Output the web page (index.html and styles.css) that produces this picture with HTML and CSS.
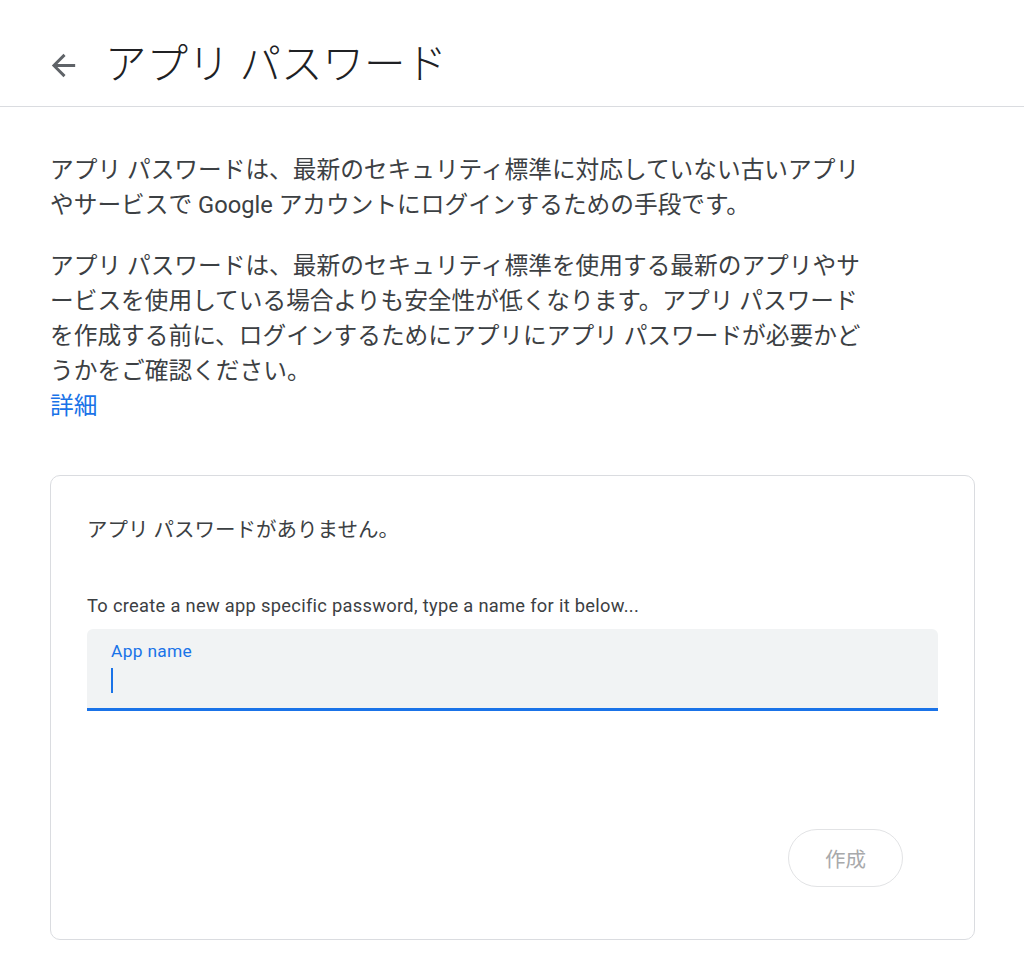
FILE: index.html
```html
<!DOCTYPE html>
<html lang="ja">
<head>
<meta charset="utf-8">
<title>アプリ パスワード</title>
<link rel="stylesheet" href="styles.css">
</head>
<body>
<header class="topbar">
  <a class="back" href="#" aria-label="戻る">
    <svg viewBox="0 0 24 24" width="35" height="35"><path d="M20 11H7.83l5.59-5.59L12 4l-8 8 8 8 1.41-1.41L7.83 13H20v-2z"/></svg>
  </a>
  <h1 class="title">アプリ パスワード</h1>
</header>
<main class="content">
  <p class="para">アプリ パスワードは、最新のセキュリティ標準に対応していない古いアプリやサービスで Google アカウントにログインするための手段です。</p>
  <p class="para last">アプリ パスワードは、最新のセキュリティ標準を使用する最新のアプリやサービスを使用している場合よりも安全性が低くなります。アプリ パスワードを作成する前に、ログインするためにアプリにアプリ パスワードが必要かどうかをご確認ください。</p>
  <a class="more" href="#">詳細</a>

  <section class="card">
    <p class="empty">アプリ パスワードがありません。</p>
    <p class="hint">To create a new app specific password, type a name for it below...</p>
    <div class="field">
      <span class="label">App name</span>
      <span class="caret"></span>
    </div>
    <div class="actions">
      <button class="create" type="button">作成</button>
    </div>
  </section>
</main>
</body>
</html>
```

FILE: styles.css
```css
html, body {
  margin: 0;
  padding: 0;
  background: #ffffff;
}

body {
  font-family: Roboto, "Noto Sans CJK JP", sans-serif;
  color: #3c4043;
}

.topbar {
  box-sizing: border-box;
  height: 107px;
  padding: 24px 0 0 46px;
  display: flex;
  align-items: center;
  gap: 24px;
  border-bottom: 1px solid #dadce0;
}

.back {
  display: flex;
  width: 35px;
  height: 35px;
}

.back svg {
  fill: #5f6368;
}

.title {
  margin: 0;
  font-weight: 300;
  font-size: 41.5px;
  line-height: 48px;
  color: #202124;
}

.content {
  padding: 46px 49px 0 50px;
}

.para {
  margin: 0 0 26px;
  max-width: 822px;
  font-size: 23.7px;
  line-height: 35px;
  color: #3c4043;
}

.para.last {
  margin-bottom: 0;
}

.more {
  display: block;
  font-size: 23.7px;
  line-height: 35px;
  color: #1a73e8;
  text-decoration: none;
}

.card {
  margin-top: 51px;
  width: 925px;
  box-sizing: border-box;
  border: 1px solid #dadce0;
  border-radius: 10px;
  padding: 39px 36px 52px 36px;
}

.empty {
  margin: 0;
  font-size: 20.5px;
  line-height: 30px;
  color: #3c4043;
}

.hint {
  margin: 48px 0 10px;
  font-size: 18.3px;
  letter-spacing: 0.3px;
  line-height: 26px;
  color: #3c4043;
}

.field {
  box-sizing: border-box;
  height: 82px;
  background: #f1f3f4;
  border-radius: 6px 6px 0 0;
  border-bottom: 3px solid #1a73e8;
  padding: 11px 24px 0;
  display: flex;
  flex-direction: column;
  align-items: flex-start;
}

.label {
  font-size: 17.4px;
  letter-spacing: 0.3px;
  line-height: 22px;
  color: #1a73e8;
}

.caret {
  margin-top: 6px;
  width: 2px;
  height: 25px;
  background: #1a73e8;
}

.actions {
  display: flex;
  justify-content: flex-end;
  padding: 118px 35px 0 0;
}

.create {
  box-sizing: border-box;
  width: 115px;
  height: 58px;
  border: 1px solid #e2e3e5;
  border-radius: 29px;
  background: #ffffff;
  font-family: Roboto, "Noto Sans CJK JP", sans-serif;
  font-size: 20.5px;
  color: #a8a9ab;
  padding: 0;
}
```
